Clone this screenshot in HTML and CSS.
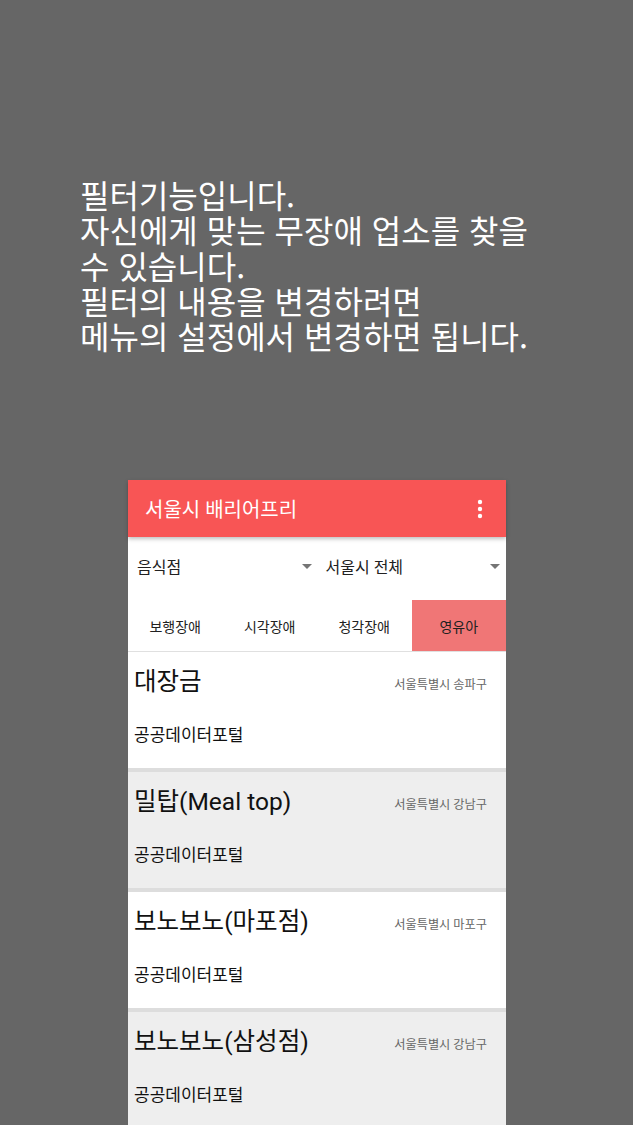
FILE: index.html
```html
<!DOCTYPE html>
<html lang="ko">
<head>
<meta charset="utf-8">
<link rel="stylesheet" href="styles.css">
</head>
<body>
<div class="page">
  <p class="intro">필터기능입니다.<br>자신에게 맞는 무장애 업소를 찾을<br>수 있습니다.<br>필터의 내용을 변경하려면<br>메뉴의 설정에서 변경하면 됩니다.</p>
  <div class="phone">
    <div class="appbar">
      <span class="appbar-title">서울시 배리어프리</span>
      <svg class="menu" width="6" height="20" viewBox="0 0 6 20"><circle cx="3" cy="3" r="2.2" fill="#fff"/><circle cx="3" cy="10" r="2.2" fill="#fff"/><circle cx="3" cy="17" r="2.2" fill="#fff"/></svg>
    </div>
    <div class="filters">
      <div class="spinner"><span>음식점</span><svg class="caret" width="10" height="5" viewBox="0 0 10 5"><path d="M0 0h10L5 5z" fill="#757575"/></svg></div>
      <div class="spinner"><span>서울시 전체</span><svg class="caret" width="10" height="5" viewBox="0 0 10 5"><path d="M0 0h10L5 5z" fill="#757575"/></svg></div>
    </div>
    <div class="tabs">
      <div class="tab">보행장애</div>
      <div class="tab">시각장애</div>
      <div class="tab">청각장애</div>
      <div class="tab active">영유아</div>
    </div>
    <div class="list">
      <div class="item">
        <div class="item-top"><span class="name">대장금</span><span class="addr">서울특별시 송파구</span></div>
        <div class="src">공공데이터포털</div>
      </div>
      <div class="item alt">
        <div class="item-top"><span class="name">밀탑(Meal top)</span><span class="addr">서울특별시 강남구</span></div>
        <div class="src">공공데이터포털</div>
      </div>
      <div class="item">
        <div class="item-top"><span class="name">보노보노(마포점)</span><span class="addr">서울특별시 마포구</span></div>
        <div class="src">공공데이터포털</div>
      </div>
      <div class="item alt">
        <div class="item-top"><span class="name">보노보노(삼성점)</span><span class="addr">서울특별시 강남구</span></div>
        <div class="src">공공데이터포털</div>
      </div>
    </div>
  </div>
</div>
</body>
</html>
```

FILE: styles.css
```css
html, body {
  margin: 0;
  padding: 0;
  background: #666666;
  height: 1125px;
  overflow: hidden;
}
body {
  font-family: Roboto, "Noto Sans CJK KR", sans-serif;
}
.page {
  padding-top: 177px;
}
.intro {
  margin: 0 0 0 80px;
  color: #ffffff;
  font-family: "Noto Sans CJK KR", sans-serif;
  font-size: 32px;
  line-height: 35.25px;
}
.phone {
  margin: 127px 0 0 128px;
  width: 378px;
  background: #ffffff;
  height: 700px;
}
.appbar {
  position: relative;
  z-index: 1;
  height: 57px;
  background: #f85555;
  display: flex;
  align-items: center;
  justify-content: space-between;
  padding: 0 23px 0 17px;
  box-shadow: 0 2px 4px rgba(0,0,0,0.25);
}
.appbar-title {
  color: #ffffff;
  font-size: 20px;
}
.menu {
  display: block;
}
.filters {
  display: flex;
  height: 58px;
  padding-bottom: 5px;
  align-items: center;
}
.spinner {
  flex: 1;
  display: flex;
  align-items: center;
  justify-content: space-between;
  padding: 0 6px 0 9px;
  font-size: 16px;
  color: #212121;
}
.spinner + .spinner {
  padding-left: 8px;
  padding-right: 6px;
}
.caret {
  display: block;
}
.tabs {
  display: grid;
  grid-template-columns: repeat(4, 1fr);
  height: 51px;
  border-bottom: 1px solid #e0e0e0;
}
.tab {
  display: flex;
  align-items: center;
  justify-content: center;
  font-size: 14px;
  color: #212121;
}
.tab.active {
  background: #f07676;
}
.item {
  height: 116px;
  background: #ffffff;
  padding: 0 19px 0 6px;
  border-bottom: 4px solid #dddddd;
}
.item.alt {
  background: #eeeeee;
}
.item-top {
  display: flex;
  justify-content: space-between;
  align-items: center;
  height: 54px;
}
.name {
  font-size: 24.5px;
  color: #111111;
}
.addr {
  font-size: 12.2px;
  color: #666666;
  padding-top: 9px;
}
.src {
  font-size: 17px;
  color: #111111;
  line-height: 22px;
  margin-top: 18px;
}
```
